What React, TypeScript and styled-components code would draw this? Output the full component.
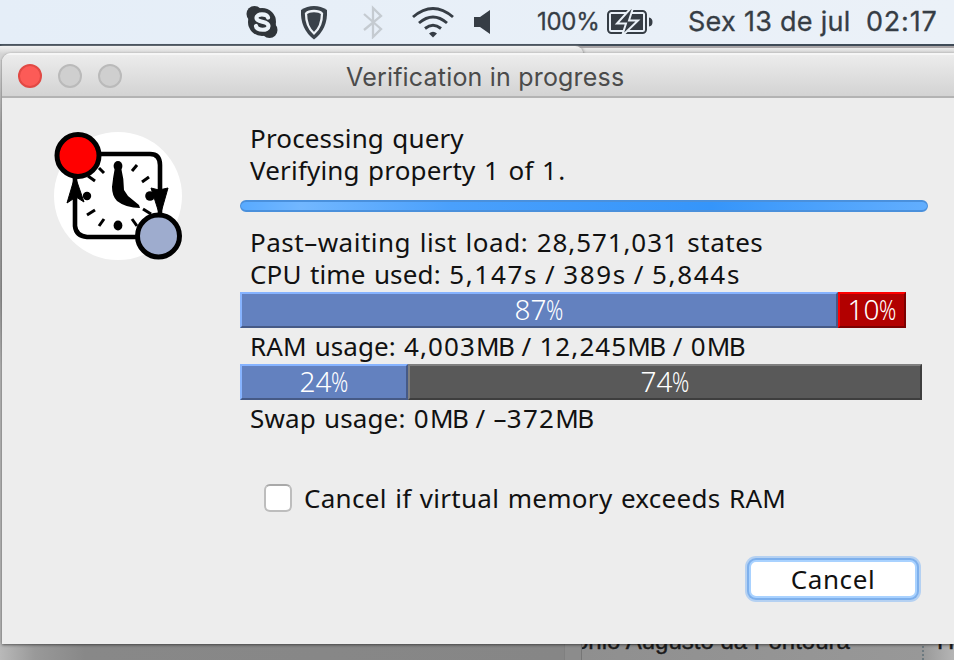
import React from 'react';
import styled, { createGlobalStyle, css } from 'styled-components';

const Global = createGlobalStyle`
  * { box-sizing: border-box; }
  body { margin: 0; overflow: hidden; }
`;

const Screen = styled.div`
  width: 954px;
  height: 660px;
  display: flex;
  flex-direction: column;
  overflow: hidden;
  background: #ededed;
`;

const MenuBar = styled.header`
  flex: none;
  height: 46px;
  padding: 0 17px 0 246px;
  display: flex;
  align-items: center;
  background: linear-gradient(90deg, #e5eef8, #ebf1f8);
  border-bottom: 2px solid #3f4b57;
  color: #363d45;
  font-family: Inter, sans-serif;
  white-space: nowrap;
`;

const MenuIcon = styled.svg<{ $gap: number }>`
  flex: none;
  display: block;
  margin-right: ${(p) => p.$gap}px;
`;

const Percent = styled.span`
  width: 62px;
  margin-right: 7px;
  font-size: 24px;
  line-height: 44px;
  letter-spacing: -0.3px;
  -webkit-text-stroke: 0.3px;
`;

const Clock = styled.span<{ $width: number; $spacing: number }>`
  width: ${(p) => p.$width}px;
  font-size: 27px;
  line-height: 44px;
  letter-spacing: ${(p) => p.$spacing}px;
  -webkit-text-stroke: 0.3px;
`;

const Desktop = styled.main`
  position: relative;
  flex: 1;
  display: flex;
  flex-direction: column;
  justify-content: space-between;
  background: linear-gradient(180deg, #e5e5e5 0, #aaa 80px, #999 250px, #b5b5b5 320px, #b5b5b5 100%);
`;

const BackTitles = styled.div`
  height: 14px;
  display: flex;
  background: linear-gradient(180deg, #a9a5a7 0, #a9a5a7 2px, #ececec 2px, #cecece 8px);
`;

const BackTitle = styled.div`
  width: 583px;
  border-top-right-radius: 8px;
  background: linear-gradient(180deg, #f3f3f3, #d4d4d4 8px);
  box-shadow: 1px 0 3px #999;
`;

const BackFooter = styled.div`
  height: 18px;
  display: flex;
  overflow: hidden;
  background: linear-gradient(90deg, #b9b9b9 0, #999 35px, #888 85px, #868686 560px);
`;

const BackEdge = styled.div`
  width: 582px;
  display: flex;
  justify-content: flex-end;

  &::after {
    content: '';
    width: 16px;
    border-left: 1px solid #808080;
    border-right: 1px solid #767676;
    background: #8c8c8c;
  }
`;

const BackCell = styled.div<{ $width: number; $shift: number }>`
  width: ${(p) => p.$width}px;
  overflow: hidden;
  white-space: nowrap;
  text-indent: ${(p) => p.$shift}px;
  font: 24px/24px 'Liberation Sans', sans-serif;
  color: #1b1b1b;
  -webkit-text-stroke: 0.4px;

  span {
    display: block;
    margin-top: -13px;
  }
`;

const BackRow = styled.div`
  flex: 1;
  display: flex;
  background: linear-gradient(90deg, #8f8f8f, #989898 340px, #b5b5b5);
`;

const Dots = styled.div`
  width: 2px;
  background: repeating-linear-gradient(180deg, #6d7a80 0 2px, transparent 2px 4px);
`;

const Dialog = styled.section`
  position: absolute;
  left: 2px;
  top: 7px;
  width: 960px;
  height: 591px;
  display: flex;
  flex-direction: column;
  border-radius: 9px 9px 0 0;
  background: #ededed;
  box-shadow: 0 1px 3px rgba(0, 0, 0, 0.5);
  overflow: hidden;
`;

const TitleBar = styled.div`
  height: 45px;
  flex: none;
  padding-left: 16px;
  display: flex;
  align-items: center;
  gap: 16px;
  background: linear-gradient(180deg, #ececec, #d3d3d3);
  border-top: 2px solid #f6f6f6;
  border-bottom: 2px solid #b3b3b3;
`;

const Light = styled.i<{ $active?: boolean }>`
  width: 24px;
  height: 24px;
  border-radius: 50%;
  border: 2px solid ${(p) => (p.$active ? '#e14944' : '#bababa')};
  background: ${(p) => (p.$active ? '#fc5b57' : '#cfcfcf')};
`;

const Title = styled.h1`
  margin: 3px 0 0 208px;
  font: 400 25px/41px Inter, sans-serif;
  letter-spacing: 0.19px;
  color: #4b4b4b;
  white-space: nowrap;
`;

const Content = styled.div`
  flex: 1;
  display: flex;
  color: #111;
  font-family: 'Noto Sans', sans-serif;
  font-size: 26px;
  letter-spacing: 0.25px;
  word-spacing: 1.4px;
  white-space: nowrap;
`;

const Logo = styled.svg`
  flex: none;
  display: block;
  margin: 32px 55px 0 49px;
`;

const Details = styled.div`
  width: 688px;
  padding-top: 24px;
  display: flex;
  flex-direction: column;
`;

const Line = styled.div<{ $spacing: number }>`
  height: 32px;
  padding-left: 10px;
  line-height: 32px;
  letter-spacing: ${(p) => p.$spacing}px;
`;

const Run = styled.span<{ $spacing: number }>`
  letter-spacing: ${(p) => p.$spacing}px;
`;

const Progress = styled.div`
  height: 12px;
  margin: 14px 0;
  border-radius: 6px;
  border: solid #4a90dc;
  border-width: 2px 1px;
  background: linear-gradient(90deg, #58aaff 0, #72b7ff 60px, #4aa0fc 210px, #3595fa 470px, #62aefe 100%);
`;

const Meter = styled.div`
  height: 36px;
  margin: 2px 0;
  display: flex;
`;

const tones = {
  blue: css`
    background: #6381bf;
    border-color: #86b3ff #465a86 #465a86 #86b3ff;
  `,
  red: css`
    background: #b20000;
    border-color: #ff0000 #7c0000 #7c0000 #ff0000;
  `,
  gray: css`
    background: #595959;
    border-color: #7f7f7f #3e3e3e #3e3e3e #7f7f7f;
  `,
};

const Segment = styled.div<{ $width: number; $tone: keyof typeof tones }>`
  width: ${(p) => p.$width}px;
  height: 36px;
  display: flex;
  justify-content: center;
  border: 2px solid;
  ${(p) => tones[p.$tone]}
  color: #fff;
  font-size: 28px;
  font-weight: 300;
  line-height: 31px;
  letter-spacing: 0;
`;

const Sign = styled.span`
  width: 17px;
  transform: scaleX(0.76);
  transform-origin: 0 50%;
`;

const Option = styled.label`
  height: 32px;
  margin: 48px 0 0 24px;
  display: flex;
  align-items: center;
  gap: 12px;
  line-height: 32px;
  letter-spacing: 0.29px;
`;

const Box = styled.span`
  width: 28px;
  height: 28px;
  border: 2px solid #bdbdbd;
  border-top-color: #a9a9a9;
  border-radius: 6px;
  background: #fff;
`;

const CancelButton = styled.button`
  align-self: flex-end;
  width: 168px;
  height: 38px;
  margin: 46px 11px 0 0;
  padding: 0;
  border: 2px solid #a9d2ff;
  border-radius: 7px;
  background: #fff;
  box-shadow: 0 0 0 2px #7eb0ec, 0 0 0 4px #b5d1f2;
  font: inherit;
  line-height: 32px;
  letter-spacing: 0.6px;
  color: #111;
`;

type StatProps = { children: string; spacing?: number; digits?: number; unit?: number };

/* A line of running text whose figures and units carry their own tracking. */
function Stat({ children, spacing = 0.25, digits = 1.4, unit = -1.6 }: StatProps) {
  return (
    <Line $spacing={spacing}>
      {children.split(/([\d,]+|MB)/).map((part, i) => {
        if (part === 'MB') return <Run key={i} $spacing={unit}>{part}</Run>;
        return /\d/.test(part) ? <Run key={i} $spacing={digits}>{part}</Run> : part;
      })}
    </Line>
  );
}

function Share({ value, width, tone }: { value: number; width: number; tone: keyof typeof tones }) {
  return (
    <Segment $width={width} $tone={tone}>
      {value}
      <Sign>%</Sign>
    </Segment>
  );
}

const ticks = [
  [99, 168, 104, 173], [88, 176, 95, 181], [132, 171, 137, 165], [142, 182, 149, 177],
  [87, 215, 95, 210], [99, 226, 104, 219], [132, 219, 137, 226], [143, 209, 151, 214],
];

function ClockLogo() {
  return (
    <Logo width="134" height="132" viewBox="51 130 134 132">
      <circle cx="118" cy="196" r="64" fill="#fff" />
      <path d="M98 154H150Q160 154 160 165V218M75 178V226Q76 236 87 237H140" fill="none" stroke="#000" strokeWidth="4.6" />
      <path d="M75 176L84 202L76 197L67 203Z M160 216L151 188L159 190L168 188Z" stroke="#000" />
      {ticks.map(([x1, y1, x2, y2]) => (
        <path key={`${x1}-${y1}`} d={`M${x1} ${y1}L${x2} ${y2}`} stroke="#000" strokeWidth="3" />
      ))}
      <g>
        <ellipse cx="118" cy="166" rx="4.4" ry="5" />
        <ellipse cx="118" cy="225.500" rx="4.4" ry="5" />
        <circle cx="87" cy="196" r="4.2" />
        <circle cx="150" cy="196" r="4.800" />
        <path d="M115 167H121Q124 179 124 190L128 196L139 205L140 208Q126 208 117 201Q112 196 112 187Q113 177 115 167Z" />
      </g>
      <circle cx="78" cy="155.500" r="21" fill="#f00" stroke="#000" strokeWidth="5" />
      <circle cx="158.500" cy="236" r="21" fill="#9eacce" stroke="#000" strokeWidth="5" />
    </Logo>
  );
}

function StatusIcons() {
  return (
    <>
      <MenuIcon $gap={22} width="32" height="34" viewBox="246 5 32 34">
        <circle cx="262" cy="22" r="14" fill="#30353a" />
        <circle cx="254.500" cy="14" r="8" fill="#30353a" />
        <circle cx="269.500" cy="30" r="8" fill="#30353a" />
        <path d="M268 17.500C267 13.500 256.500 13 256.500 18C256.500 23 268.500 20.500 268.500 26C268.500 31 257 31 256 26" fill="none" stroke="#ebf2f8" strokeWidth="4.200" strokeLinecap="round" />
      </MenuIcon>
      <MenuIcon $gap={34} width="28" height="36" viewBox="300 4 28 36">
        <path d="M314 6Q321 6 327 10Q328 29 314 39.500Q300 29 301 10Q307 6 314 6Z" fill="#3a424a" />
        <path d="M314 11Q319.500 11 322 13.500Q322 26.500 314 33.500Q306 26.500 306 13.500Q308.500 11 314 11Z" fill="#3a424a" stroke="#edf2f7" strokeWidth="2.300" />
      </MenuIcon>
      <MenuIcon $gap={27} width="22" height="34" viewBox="362 5 22 34">
        <path d="M364 14L381 29L373 37V8L381 16L364 30" fill="none" stroke="#c5cbd1" strokeWidth="2.300" />
      </MenuIcon>
      <MenuIcon $gap={17} width="44" height="32" viewBox="411 5 44 32">
        <g fill="none" stroke="#363d45" strokeWidth="2.900">
          <path d="M413 16Q433 -1 453 16" />
          <path d="M419 22Q433 10 447 22" />
          <path d="M425 27.500Q433 21 441 27.500" />
        </g>
        <path d="M429 32.500Q433 29 437 32.500L433 36.500Z" fill="#363d45" />
      </MenuIcon>
      <MenuIcon $gap={45} width="20" height="28" viewBox="472 8 20 28">
        <path d="M474 17H480L490 10V34L480 27H474Z" fill="#363d45" />
      </MenuIcon>
    </>
  );
}

function Battery() {
  return (
    <MenuIcon $gap={35} width="47" height="28" viewBox="605 8 47 28">
      <rect x="607" y="11" width="38" height="22" rx="3.500" fill="none" stroke="#363d45" strokeWidth="2" />
      <rect x="610" y="14" width="32" height="16" fill="#363d45" />
      <path d="M648 17.500Q651.500 18 651.500 22Q651.500 26 648 26.500Z" fill="#363d45" />
      <path d="M630 8L616 23.500H625L621 36L637 20.500H628L632 8Z" fill="#363d45" stroke="#eaf1f8" strokeWidth="2" />
    </MenuIcon>
  );
}

export default function App() {
  return (
    <Screen>
      <Global />
      <MenuBar>
        <StatusIcons />
        <Percent>100%</Percent>
        <Battery />
        <Clock $width={178} $spacing={0.28}>Sex 13 de jul</Clock>
        <Clock $width={71} $spacing={0.8}>02:17</Clock>
      </MenuBar>
      <Desktop>
        <BackTitles><BackTitle /></BackTitles>
        <BackFooter>
          <BackEdge />
          <BackRow>
            <BackCell $width={340} $shift={-7}><span>ônio Augusto da Fontoura</span></BackCell>
            <Dots />
            <BackCell $width={30} $shift={13}><span>H</span></BackCell>
          </BackRow>
        </BackFooter>
        <Dialog>
          <TitleBar>
            <Light $active />
            <Light />
            <Light />
            <Title>Verification in progress</Title>
          </TitleBar>
          <Content>
            <ClockLogo />
            <Details>
              <Stat spacing={0.15}>Processing query</Stat>
              <Stat spacing={0.18}>Verifying property 1 of 1.</Stat>
              <Progress />
              <Stat spacing={0.5} digits={0.9}>Past–waiting list load: 28,571,031 states</Stat>
              <Stat spacing={0.15} digits={1.7}>CPU time used: 5,147s / 389s / 5,844s</Stat>
              <Meter>
                <Share value={87} width={598} tone="blue" />
                <Share value={10} width={68} tone="red" />
              </Meter>
              <Stat spacing={0.05} digits={1.1}>RAM usage: 4,003MB / 12,245MB / 0MB</Stat>
              <Meter>
                <Share value={24} width={168} tone="blue" />
                <Share value={74} width={514} tone="gray" />
              </Meter>
              <Stat spacing={0.12} digits={1.3}>Swap usage: 0MB / –372MB</Stat>
              <Option><Box />Cancel if virtual memory exceeds RAM</Option>
              <CancelButton>Cancel</CancelButton>
            </Details>
          </Content>
        </Dialog>
      </Desktop>
    </Screen>
  );
}
